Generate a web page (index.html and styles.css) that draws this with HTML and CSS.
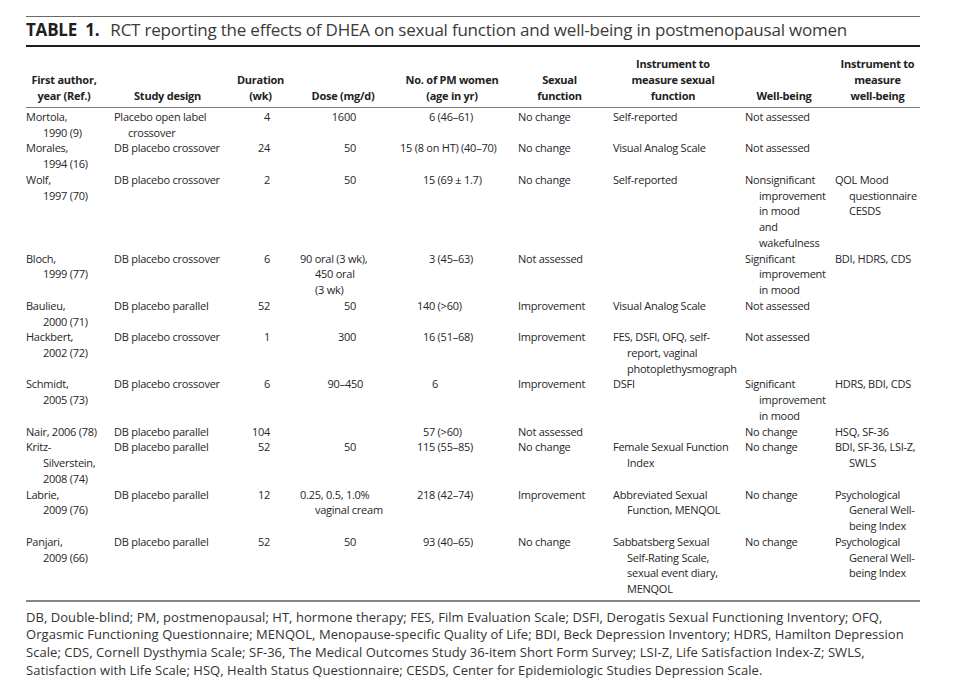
FILE: index.html
```html
<!DOCTYPE html>
<html lang="en">
<head>
<meta charset="utf-8">
<title>Table 1</title>
<link rel="stylesheet" href="styles.css">
</head>
<body>
<div class="page">
  <div class="rule-top"></div>
  <h1 class="title"><span class="label">TABLE 1.</span>RCT reporting the effects of DHEA on sexual function and well-being in postmenopausal women</h1>
  <div class="rule-thick"></div>
  <table class="data">
    <colgroup>
      <col class="w1"><col class="w2"><col class="w3"><col class="w4"><col class="w5"><col class="w6"><col class="w7"><col class="w8"><col class="w9">
    </colgroup>
    <thead>
      <tr>
        <th>First author,<br>year (Ref.)</th>
        <th>Study design</th>
        <th>Duration<br>(wk)</th>
        <th>Dose (mg/d)</th>
        <th>No. of PM women<br>(age in yr)</th>
        <th>Sexual<br>function</th>
        <th>Instrument to<br>measure sexual<br>function</th>
        <th>Well-being</th>
        <th>Instrument to<br>measure<br>well-being</th>
      </tr>
    </thead>
    <tbody>
      <tr>
        <td class="c1">Mortola,<br>1990 (9)</td>
        <td class="c2">Placebo open label<br>crossover</td>
        <td class="c3">4</td>
        <td class="c4 dn">1600</td>
        <td class="c5"><span class="nn">6</span> (46–61)</td>
        <td class="c6">No change</td>
        <td class="c7">Self-reported</td>
        <td class="c8">Not assessed</td>
        <td class="c9"></td>
      </tr>
      <tr>
        <td class="c1">Morales,<br>1994 (16)</td>
        <td class="c2">DB placebo crossover</td>
        <td class="c3">24</td>
        <td class="c4 dn">50</td>
        <td class="c5 plain">15 (8 on HT) (40–70)</td>
        <td class="c6">No change</td>
        <td class="c7">Visual Analog Scale</td>
        <td class="c8">Not assessed</td>
        <td class="c9"></td>
      </tr>
      <tr>
        <td class="c1">Wolf,<br>1997 (70)</td>
        <td class="c2">DB placebo crossover</td>
        <td class="c3">2</td>
        <td class="c4 dn">50</td>
        <td class="c5"><span class="nn">15</span> (69 ± 1.7)</td>
        <td class="c6">No change</td>
        <td class="c7">Self-reported</td>
        <td class="c8">Nonsignificant<br>improvement<br>in mood<br>and<br>wakefulness</td>
        <td class="c9">QOL Mood<br>questionnaire<br>CESDS</td>
      </tr>
      <tr>
        <td class="c1">Bloch,<br>1999 (77)</td>
        <td class="c2">DB placebo crossover</td>
        <td class="c3">6</td>
        <td class="c4">90 oral (3 wk),<br>450 oral<br>(3 wk)</td>
        <td class="c5"><span class="nn">3</span> (45–63)</td>
        <td class="c6">Not assessed</td>
        <td class="c7"></td>
        <td class="c8">Significant<br>improvement<br>in mood</td>
        <td class="c9">BDI, HDRS, CDS</td>
      </tr>
      <tr>
        <td class="c1">Baulieu,<br>2000 (71)</td>
        <td class="c2">DB placebo parallel</td>
        <td class="c3">52</td>
        <td class="c4 dn">50</td>
        <td class="c5"><span class="nn">140</span> (&gt;60)</td>
        <td class="c6">Improvement</td>
        <td class="c7">Visual Analog Scale</td>
        <td class="c8">Not assessed</td>
        <td class="c9"></td>
      </tr>
      <tr>
        <td class="c1">Hackbert,<br>2002 (72)</td>
        <td class="c2">DB placebo crossover</td>
        <td class="c3">1</td>
        <td class="c4 dn">300</td>
        <td class="c5"><span class="nn">16</span> (51–68)</td>
        <td class="c6">Improvement</td>
        <td class="c7">FES, DSFI, OFQ, self-<br>report, vaginal<br>photoplethysmograph</td>
        <td class="c8">Not assessed</td>
        <td class="c9"></td>
      </tr>
      <tr>
        <td class="c1">Schmidt,<br>2005 (73)</td>
        <td class="c2">DB placebo crossover</td>
        <td class="c3">6</td>
        <td class="c4 dn dn-range">90–450</td>
        <td class="c5"><span class="nn nn-solo">6</span></td>
        <td class="c6">Improvement</td>
        <td class="c7">DSFI</td>
        <td class="c8">Significant<br>improvement<br>in mood</td>
        <td class="c9">HDRS, BDI, CDS</td>
      </tr>
      <tr>
        <td class="c1">Nair, 2006 (78)</td>
        <td class="c2">DB placebo parallel</td>
        <td class="c3">104</td>
        <td class="c4 dn"></td>
        <td class="c5"><span class="nn">57</span> (&gt;60)</td>
        <td class="c6">Not assessed</td>
        <td class="c7"></td>
        <td class="c8">No change</td>
        <td class="c9">HSQ, SF-36</td>
      </tr>
      <tr>
        <td class="c1">Kritz-<br>Silverstein,<br>2008 (74)</td>
        <td class="c2">DB placebo parallel</td>
        <td class="c3">52</td>
        <td class="c4 dn">50</td>
        <td class="c5"><span class="nn">115</span> (55–85)</td>
        <td class="c6">No change</td>
        <td class="c7">Female Sexual Function<br>Index</td>
        <td class="c8">No change</td>
        <td class="c9">BDI, SF-36, LSI-Z,<br>SWLS</td>
      </tr>
      <tr>
        <td class="c1">Labrie,<br>2009 (76)</td>
        <td class="c2">DB placebo parallel</td>
        <td class="c3">12</td>
        <td class="c4">0.25, 0.5, 1.0%<br>vaginal cream</td>
        <td class="c5"><span class="nn">218</span> (42–74)</td>
        <td class="c6">Improvement</td>
        <td class="c7">Abbreviated Sexual<br>Function, MENQOL</td>
        <td class="c8">No change</td>
        <td class="c9">Psychological<br>General Well-<br>being Index</td>
      </tr>
      <tr class="last">
        <td class="c1">Panjari,<br>2009 (66)</td>
        <td class="c2">DB placebo parallel</td>
        <td class="c3">52</td>
        <td class="c4 dn">50</td>
        <td class="c5"><span class="nn">93</span> (40–65)</td>
        <td class="c6">No change</td>
        <td class="c7">Sabbatsberg Sexual<br>Self-Rating Scale,<br>sexual event diary,<br>MENQOL</td>
        <td class="c8">No change</td>
        <td class="c9">Psychological<br>General Well-<br>being Index</td>
      </tr>
    </tbody>
  </table>
  <div class="rule-bottom"></div>
  <p class="notes">DB, Double-blind; PM, postmenopausal; HT, hormone therapy; FES, Film Evaluation Scale; DSFI, Derogatis Sexual Functioning Inventory; OFQ,<br>Orgasmic Functioning Questionnaire; MENQOL, Menopause-specific Quality of Life; BDI, Beck Depression Inventory; HDRS, Hamilton Depression<br>Scale; CDS, Cornell Dysthymia Scale; SF-36, The Medical Outcomes Study 36-item Short Form Survey; LSI-Z, Life Satisfaction Index-Z; SWLS,<br>Satisfaction with Life Scale; HSQ, Health Status Questionnaire; CESDS, Center for Epidemiologic Studies Depression Scale.</p>
</div>
</body>
</html>
```

FILE: styles.css
```css
html, body {
  margin: 0;
  padding: 0;
  background: #ffffff;
}

body {
  font-family: "Open Sans", "Noto Sans", sans-serif;
  color: #262626;
}

.page {
  width: 894px;
  padding: 16px 0 0 26px;
}

.rule-top {
  height: 1px;
  background: #6a6a6a;
}

.title {
  margin: 0;
  font-size: 17px;
  line-height: 26px;
  font-weight: 400;
  color: #3a3a3a;
  letter-spacing: -0.22px;
  white-space: nowrap;
}

.title .label {
  font-weight: 700;
  color: #1e1e1e;
  word-spacing: 4px;
  margin-right: 11px;
}

.rule-thick {
  margin-top: 2px;
  height: 2px;
  background: #1c1c1c;
}

.data {
  width: 894px;
  border-collapse: collapse;
  table-layout: fixed;
  font-size: 11px;
  letter-spacing: -0.25px;
  white-space: nowrap;
}

.w1 { width: 88px; }
.w2 { width: 119px; }
.w3 { width: 67px; }
.w4 { width: 98px; }
.w5 { width: 120px; }
.w6 { width: 95px; }
.w7 { width: 132px; }
.w8 { width: 90px; }
.w9 { width: 85px; }

.data th {
  font-weight: 700;
  color: #222222;
  line-height: 16px;
  text-align: center;
  vertical-align: bottom;
  padding: 9px 12px 3px 0;
  border-bottom: 1px solid #7a7a7a;
}

.data th:last-child {
  padding-right: 0;
}

.data td {
  line-height: 15.73px;
  vertical-align: top;
  padding: 0 12px 0 0;
  text-align: left;
}

.data tbody tr:first-child td {
  padding-top: 1px;
}

.data tbody tr.last td {
  padding-bottom: 3px;
}

.data td.c1 { padding-left: 17px; text-indent: -17px; }
.data td.c2 { padding-left: 14px; text-indent: -14px; }
.data td.c3 { text-align: right; padding-right: 30px; }
.data td.c4 { padding-left: 15px; text-indent: -15px; }
.data td.c4.dn { text-align: right; padding-left: 0; text-indent: 0; padding-right: 42px; }
.data td.c4.dn-range { padding-right: 35px; }
.data td.c5.plain { padding-left: 2px; }
.data td.c7,
.data td.c8,
.data td.c9 { padding-left: 14px; text-indent: -14px; }
.data td.c9 { padding-right: 0; }

.nn {
  display: inline-block;
  width: 37px;
  text-align: right;
  text-indent: 0;
}

.nn.nn-solo {
  width: 40px;
}

.rule-bottom {
  height: 2px;
  background: #858585;
}

.notes {
  margin: 7px 0 0 0;
  font-size: 13px;
  line-height: 17.7px;
  letter-spacing: 0.05px;
  color: #333333;
  white-space: nowrap;
}
```
